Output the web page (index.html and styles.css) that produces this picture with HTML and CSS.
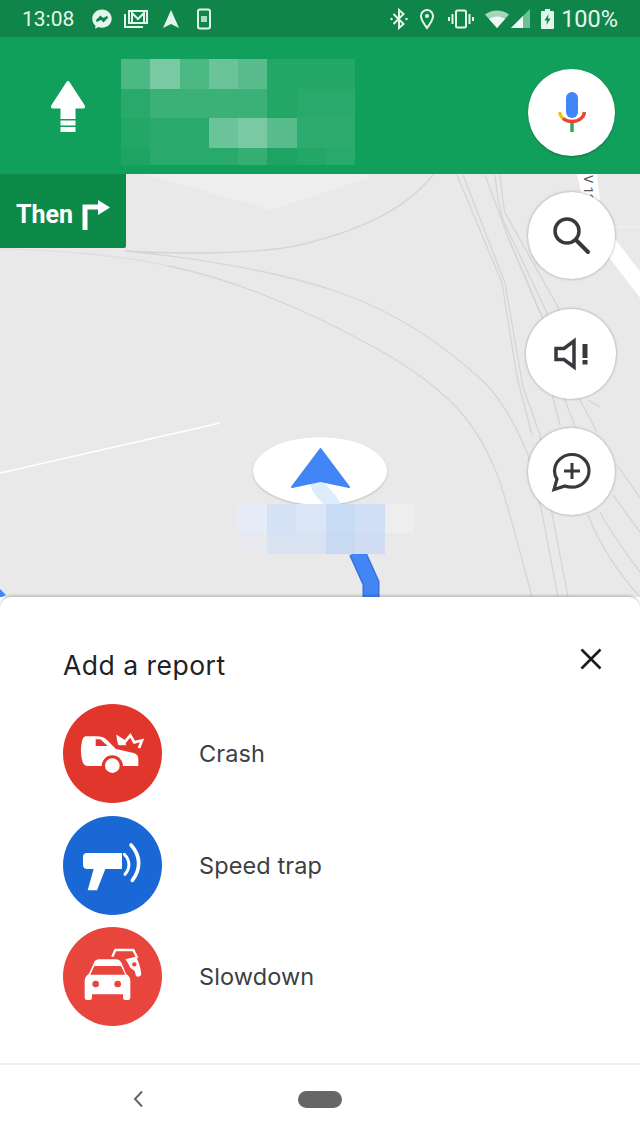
FILE: index.html
```html
<!DOCTYPE html>
<html>
<head>
    <meta charset="utf-8">
    <title>Add a report</title>
    <link rel="stylesheet" href="styles.css">
</head>
<body>
    <div class="phone">
        <div class="status-bar">
            <div class="status-left">
                <span class="clock">13:08</span>
                <svg class="ic-messenger" width="22" height="22" viewBox="0 0 22 22"><path fill="#e4f5ec" d="M11 1.500C5.500 1.500 1.300 5.500 1.300 10.700c0 2.800 1.100 5.200 3 6.800v3.300l3-1.700c1.100.4 2.400.6 3.700.6 5.500 0 9.700-4 9.700-9S16.500 1.500 11 1.500z"/><path fill="none" stroke="#0f8549" stroke-width="2" d="M5.500 13l4-4.200 2.500 2.400 4.500-2.400-4 4.200-2.500-2.400z"/></svg>
                <svg class="ic-gmail" width="24" height="22" viewBox="0 0 24 22"><g fill="none" stroke="#e4f5ec" stroke-width="2"><path d="M1 6v13h18"/><path d="M5 3h18v12H5z"/></g><path fill="none" stroke="#e4f5ec" stroke-width="2" d="M8 14V5l6 6 6-6v9"/></svg>
                <svg class="ic-arrow" width="18" height="20" viewBox="0 0 18 20"><path fill="#e4f5ec" d="M9 1l8 18-8-4-8 4z"/></svg>
                <svg class="ic-phone" width="14" height="22" viewBox="0 0 14 22"><rect x="1" y="1.500" width="12" height="19" rx="2" fill="none" stroke="#e4f5ec" stroke-width="2"/><rect x="4" y="8" width="6" height="6" fill="#a9dcc0"/></svg>
            </div>
            <div class="status-right">
                <svg width="18" height="22" viewBox="0 0 18 22"><path fill="none" stroke="#e4f5ec" stroke-width="2" d="M3.500 6l10 10-4.500 4V2l4.500 4-10 10"/><circle cx="1.500" cy="11" r="1.200" fill="#e4f5ec"/><circle cx="16.500" cy="11" r="1.200" fill="#e4f5ec"/></svg>
                <svg width="16" height="22" viewBox="0 0 16 22"><path fill="none" stroke="#e4f5ec" stroke-width="2" d="M8 20C5 15.500 2 12.500 2 8a6 6 0 0 1 12 0c0 4.500-3 7.500-6 12z"/><circle cx="8" cy="8" r="2" fill="#e4f5ec"/></svg>
                <svg class="ic-vibrate" width="26" height="20" viewBox="0 0 26 20"><rect x="8" y="1.500" width="10" height="17" rx="1.500" fill="none" stroke="#e4f5ec" stroke-width="2"/><path fill="none" stroke="#e4f5ec" stroke-width="2" d="M4.500 5v10M21.500 5v10M1 8v4M25 8v4"/></svg>
                <svg width="24" height="18" viewBox="0 0 24 18"><path fill="#a5d6bb" d="M0 4.500C7-1 17-1 24 4.500L12 18z"/><path fill="#eefaf3" d="M4 9c5-3.500 11-3.500 16 0l-8 9z"/></svg>
                <svg class="ic-signal" width="19" height="19" viewBox="0 0 19 19"><path fill="#6fbf97" d="M19 0v19H0z"/><path fill="#eefaf3" d="M12 7v12H0z"/></svg>
                <svg width="13" height="20" viewBox="0 0 13 20"><path fill="#e4f5ec" d="M4 0h5v2h3a1 1 0 0 1 1 1v16a1 1 0 0 1-1 1H1a1 1 0 0 1-1-1V3a1 1 0 0 1 1-1h3z"/><path fill="#0f8549" d="M7.500 5L3.500 11.500h2.500L5.500 16l4-6.500H7z"/></svg>
                <span class="battery">100%</span>
            </div>
        </div>

        <div class="nav-header">
            <svg width="36" height="52" viewBox="0 0 36 52"><path fill="#fff" d="M16.500 2c1-1.200 2-1.200 3 0L34.500 25c1.200 2 .5 3.500-1.500 3.500H25.500V39h-15V28.500H3c-2 0-2.700-1.500-1.500-3.500z"/><path fill="#fff" d="M10.500 40.500h15v5h-15zM10.500 47h15v5h-15z"/></svg>
            <div class="mic-button">
                <svg width="28" height="40" viewBox="0 0 28 40">
                    <rect x="8" y="0" width="12" height="26" rx="6" fill="#4285f4"/>
                    <path fill="none" stroke="#fbbc05" stroke-width="3" d="M1.500 20c.5 3 2 5.500 4 7"/>
                    <path fill="none" stroke="#ea4335" stroke-width="3.500" d="M5 26.500c5 4 13 4 18 0 2-1.600 3.200-3.800 3.500-6.500"/>
                    <path fill="none" stroke="#34a853" stroke-width="3.500" d="M14 31v9"/>
                </svg>
            </div>
        </div>
        <div class="mosaic street-name">
            <i class="g25"></i><i class="g45"></i><i class="g25"></i><i class="g40"></i><i class="g30"></i><i class="g08"></i><i class="g08"></i><i class="g08"></i>
            <i class="g10"></i><i class="g20"></i><i class="g20"></i><i class="g20"></i><i class="g20"></i><i class="g08"></i><i class="g10"></i><i class="g10"></i>
            <i class="g08"></i><i class="g10"></i><i class="g10"></i><i class="g40"></i><i class="g45"></i><i class="g30"></i><i class="g12"></i><i class="g12"></i>
            <i class="g05"></i><i class="g10"></i><i class="g10"></i><i class="g10"></i><i class="g15"></i><i class="g05"></i><i class="g08"></i><i class="g10"></i>
        </div>

        <div class="map">
            <svg class="map-lines" width="640" height="423" viewBox="0 174 640 423">
                <path fill="#eeeeee" d="M143 174l94 26 33 10 98-32v-4z"/>
                <path fill="none" stroke="#dfdcdc" stroke-width="1.200" d="M0 249C60 250 125 256 169 266"/>
                <g fill="none" stroke="#d5d5d5" stroke-width="1.300">
                    <path d="M169 266C240 281 310 312 372 346C405 364 435 385 456 407C480 432 492 460 500 482C512 520 522 560 532 597"/>
                    <path d="M125 251C200 258 280 272 338 292C400 313 450 350 487 385C505 405 518 430 528 455L542 513L558 597"/>
                    <path d="M125 251C180 254 260 255 304 244C360 230 405 210 433 175"/>
                    <path d="M457 175L502 283L517 377L532 435"/>
                    <path d="M463 175L505 283L523 387L540 435L552 513L568 597"/>
                    <path d="M485 175L508 237L540 313"/>
                    <path d="M495 175C497 195 500 210 503 220L547 313L553 398L560 425"/>
                    <path d="M500 175C502 190 503 205 505 213L558 307L565 400L575 427"/>
                    <path d="M508 237L565 370L580 400L597 432"/>
                    <path d="M588 400L600 407"/>
                    <path d="M588 515C600 545 620 575 640 597"/>
                    <path d="M600 512C610 532 625 552 640 572"/>
                    <path d="M613 495L640 532"/>
                    <path d="M617 465L640 498"/>
                </g>
                <path fill="none" stroke="#fff" stroke-width="1.500" d="M0 473L220 423"/>
                <path fill="none" stroke="#fff" stroke-width="16" d="M608 243L648 295"/>
                <path fill="none" stroke="#f4f4f4" stroke-width="1" d="M610 227H640"/>
                <path fill="#fff" d="M577 174h20l3 26h-17z"/>
                <text class="road-label" transform="translate(584 175) rotate(90)">V 12</text>
                <path fill="none" stroke="#3a72dc" stroke-width="17" d="M357 552L371 583V597"/>
                <path fill="none" stroke="#4285f4" stroke-width="14" d="M357 552L371 583V597"/>
                <path fill="#4285f4" d="M0 589l6 6-6 3z"/>
            </svg>

            <div class="then-tab">
                <span>Then</span>
                <svg width="28" height="30" viewBox="0 0 28 30"><path fill="none" stroke="#fff" stroke-width="5" d="M3 30V7h15"/><path fill="#fff" d="M16 0l12 7.500L16 15z"/></svg>
            </div>

            <div class="fabs">
                <div class="fab">
                    <svg width="40" height="40" viewBox="0 0 40 40"><circle cx="16" cy="15" r="12" fill="none" stroke="#37393c" stroke-width="3.500"/><path stroke="#37393c" stroke-width="4" stroke-linecap="round" d="M25 24L37 36"/></svg>
                </div>
                <div class="fab fab-big">
                    <svg width="36" height="36" viewBox="0 0 36 36"><path fill="none" stroke="#37393c" stroke-width="3.500" d="M3 12.500h8L21 5v26l-10-7.500H3z"/><path fill="#37393c" d="M29.500 8h5v14h-5zM29.500 24h5v4.500h-5z"/></svg>
                </div>
                <div class="fab">
                    <svg width="42" height="42" viewBox="0 0 42 42"><path fill="none" stroke="#37393c" stroke-width="3.200" d="M22 3.500C12.500 3.500 4.500 11 4.500 20c0 3 .8 5.500 2.500 8L4 38.500l11-3.500c2 .8 4.500 1.200 7 1.200 9.500 0 17-7.500 17-16.500S31.500 3.500 22 3.500z"/><path stroke="#37393c" stroke-width="3" d="M22 12v16M14 20h16"/></svg>
                </div>
            </div>

            <div class="puck">
                <svg width="60" height="58" viewBox="0 0 60 58">
                    <path fill="none" stroke="#deedfb" stroke-width="15" d="M28 36C28 44 38 48 44 60"/>
                    <path fill="#4285f4" stroke="#4285f4" stroke-width="2" stroke-linejoin="round" d="M30.500 2L59 40 30.500 34 2 40z"/>
                </svg>
            </div>
            <div class="mosaic place-name">
                <i class="b1"></i><i class="b2"></i><i class="b3"></i><i class="b4"></i><i class="b5"></i><i class="b6"></i>
                <i class="b7"></i><i class="b8"></i><i class="b8"></i><i class="b9"></i><i class="b10"></i><i></i>
            </div>
        </div>

        <div class="sheet">
            <div class="sheet-head">
                <h2>Add a report</h2>
                <svg class="close" width="22" height="22" viewBox="0 0 22 22"><path stroke="#1c1c1c" stroke-width="2.600" d="M1.500 1.500l19 19M20.500 1.500l-19 19"/></svg>
            </div>
            <div class="report-row">
                <div class="report-icon crash">
                    <svg width="99" height="99" viewBox="38 28 297 297">
                        <path fill="#fff" d="M108 125H140C152 125 162 128 170 136L197 163L250 175C260 178 264 184 264 192V214H218A32 32 0 0 0 154 214H112C102 214 96 205 94 190C91 170 91 160 94 145C96 132 100 125 108 125Z"/>
                        <path fill="#e1362b" d="M136 134H150L172 154H136Z"/>
                        <circle cx="186" cy="213" r="22" fill="#fff"/>
                        <path fill="none" stroke="#fff" stroke-width="8" d="M207 150L203 128L224 141L240 122L252 143L275 137L266 160"/>
                        <path fill="#fff" d="M205 126L224 141L228 152L207 152Z"/>
                    </svg>
                </div>
                <span>Crash</span>
            </div>
            <div class="report-row">
                <div class="report-icon trap">
                    <svg width="99" height="99" viewBox="38 15 297 297">
                        <path fill="#fff" d="M110 126H215V174H165L140 238H112L130 174H110C102 174 98 168 98 161V138C98 130 102 126 110 126Z"/>
                        <path fill="none" stroke="#fff" stroke-width="9" stroke-linecap="round" d="M222 130C240 148 240 172 224 190"/>
                        <path fill="none" stroke="#fff" stroke-width="11" stroke-linecap="round" d="M242 102C272 135 272 175 246 208"/>
                    </svg>
                </div>
                <span>Speed trap</span>
            </div>
            <div class="report-row">
                <div class="report-icon slow">
                    <svg width="99" height="99" viewBox="3 3 297 297">
                        <path fill="none" stroke="#fff" stroke-width="7" d="M151 92L160 72H214L226 96"/>
                        <path fill="#fff" d="M190 100L222 92C230 105 236 125 238 145C236 152 228 154 222 150L218 135L205 125C200 115 196 106 190 100Z"/>
                        <circle cx="217" cy="115" r="6.500" fill="#e8453c"/>
                        <path fill="#fff" d="M95 112C98 104 103 100 112 100H162C170 100 175 104 179 112L192 143C200 148 205 155 205 165V215A7 7 0 0 1 198 222H190A7 7 0 0 1 183 215V205H90V215A7 7 0 0 1 83 222H75A7 7 0 0 1 68 215V165C68 155 73 148 81 143Z"/>
                        <path fill="#e8453c" d="M85 146L97 120H177L190 146Z"/>
                        <circle cx="101" cy="174" r="10" fill="#e8453c"/>
                        <circle cx="167" cy="174" r="10" fill="#e8453c"/>
                    </svg>
                </div>
                <span>Slowdown</span>
            </div>
        </div>

        <div class="nav-bar">
            <svg class="back" width="12" height="18" viewBox="0 0 12 18"><path fill="none" stroke="#666" stroke-width="2" d="M10 1.500L3 9l7 7.500"/></svg>
            <div class="home-pill"></div>
        </div>
    </div>
</body>
</html>
```

FILE: styles.css
```css
* {
    box-sizing: border-box;
}
body {
    margin: 0;
    background: #fff;
    font-family: Roboto, "Noto Sans", sans-serif;
}
.phone {
    position: relative;
    width: 640px;
    height: 1137px;
    display: flex;
    flex-direction: column;
    overflow: hidden;
}

/* status bar */
.status-bar {
    height: 37px;
    background: #0f8549;
    color: #e8f6ee;
    display: flex;
    justify-content: space-between;
    align-items: center;
    padding: 0 22px;
}
.status-left, .status-right {
    display: flex;
    align-items: center;
}
.status-right { gap: 11px; }
.clock { font-size: 21px; }
.ic-messenger { margin-left: 17px; }
.ic-gmail { margin-left: 11px; }
.ic-arrow { margin-left: 14px; }
.ic-phone { margin-left: 17px; }
.ic-vibrate { margin-left: 2px; }
.ic-signal { margin-left: -9px; }
.battery {
    font-size: 23.500px;
    margin-left: -4px;
}

/* green header */
.nav-header {
    height: 137px;
    background: #11a05b;
    display: flex;
    justify-content: space-between;
    align-items: center;
    padding: 0 25px 0 50px;
    flex-shrink: 0;
}
.mic-button {
    width: 87px;
    height: 87px;
    margin-top: 13px;
    border-radius: 50%;
    background: #fff;
    box-shadow: 0 1px 2px rgba(0,0,0,0.3);
    display: flex;
    align-items: center;
    justify-content: center;
}

/* blurred out text */
.mosaic {
    position: absolute;
    display: grid;
}
.street-name {
    left: 121px;
    top: 59px;
    grid-template-columns: repeat(8, 29.300px);
    grid-template-rows: 30px 29px 30px 17px;
}
.g05 { background: rgba(255,255,255,0.05); }
.g08 { background: rgba(255,255,255,0.08); }
.g10 { background: rgba(255,255,255,0.10); }
.g12 { background: rgba(255,255,255,0.12); }
.g15 { background: rgba(255,255,255,0.15); }
.g20 { background: rgba(255,255,255,0.18); }
.g25 { background: rgba(255,255,255,0.25); }
.g30 { background: rgba(255,255,255,0.30); }
.g40 { background: rgba(255,255,255,0.38); }
.g45 { background: rgba(255,255,255,0.44); }

.place-name {
    left: 237px;
    top: 330px;
    grid-template-columns: repeat(6, 29.500px);
    grid-template-rows: 29px 21px;
}
.b1 { background: #e6ecf7; }
.b2 { background: #d5e2f6; }
.b3 { background: #dae5f6; }
.b4 { background: #c9dcf6; }
.b5 { background: #d0def6; }
.b6 { background: #eeeeee; }
.b7 { background: #e8e9ee; }
.b8 { background: #d9e2f1; }
.b9 { background: #c8d9f2; }
.b10 { background: #cfdcf3; }

/* map */
.map {
    position: relative;
    height: 423px;
    background: #e9e9e9;
    flex-shrink: 0;
}
.map-lines {
    position: absolute;
    left: 0;
    top: 0;
}
.road-label {
    font-size: 13px;
    fill: #555;
}
.then-tab {
    position: absolute;
    left: 0;
    top: 0;
    width: 126px;
    height: 74px;
    background: #0d8a48;
    border-bottom-right-radius: 2px;
    color: #fff;
    display: flex;
    align-items: center;
    gap: 9px;
    padding: 7px 0 0 16px;
    font-size: 25px;
    font-weight: 700;
}
.fabs {
    position: absolute;
    right: 24px;
    top: 18px;
    width: 90px;
    display: flex;
    flex-direction: column;
    align-items: center;
    gap: 29.500px;
}
.fab {
    width: 87px;
    height: 87px;
    border-radius: 50%;
    background: #fff;
    box-shadow: 0 0 3px rgba(0,0,0,0.35);
    display: flex;
    align-items: center;
    justify-content: center;
}
.fab-big {
    width: 90px;
    height: 90px;
}
.puck {
    position: absolute;
    left: 253px;
    top: 263px;
    width: 134px;
    height: 68px;
    border-radius: 50%;
    background: #fff;
    box-shadow: 0 1px 2px rgba(0,0,0,0.2);
    display: flex;
    justify-content: center;
    padding-top: 10px;
}

/* report sheet */
.sheet {
    position: relative;
    flex: 1;
    background: #fff;
    border-radius: 12px 12px 0 0;
    box-shadow: 0 -2px 2px rgba(0,0,0,0.16);
    padding: 0 38px 0 63px;
}
.sheet-head {
    display: flex;
    justify-content: space-between;
    align-items: center;
    height: 49px;
    margin-top: 43px;
    margin-bottom: 15px;
}
h2 {
    margin: 0;
    font-family: Inter, Roboto, sans-serif;
    font-size: 26.500px;
    font-weight: 400;
    letter-spacing: 0.5px;
    color: #202124;
}
.close { margin-bottom: 11px; }
.report-row {
    display: flex;
    align-items: center;
    gap: 37px;
    height: 99px;
    margin-bottom: 12.500px;
    font-family: Inter, Roboto, sans-serif;
    font-size: 23.500px;
    letter-spacing: 0.1px;
    color: #3c4043;
}
.report-icon {
    width: 99px;
    height: 99px;
    border-radius: 50%;
    display: flex;
    align-items: center;
    justify-content: center;
}
.crash { background: #e1362b; }
.trap { background: #1a68d6; }
.slow { background: #e8453c; }

/* android nav */
.nav-bar {
    position: relative;
    height: 74px;
    background: #fff;
    border-top: 2px solid #eeeeee;
    flex-shrink: 0;
    display: flex;
    align-items: center;
    justify-content: center;
    padding-bottom: 4px;
}
.back {
    position: absolute;
    left: 132px;
    top: 25px;
}
.home-pill {
    width: 44px;
    height: 17px;
    border-radius: 9px;
    background: #666;
}
```
